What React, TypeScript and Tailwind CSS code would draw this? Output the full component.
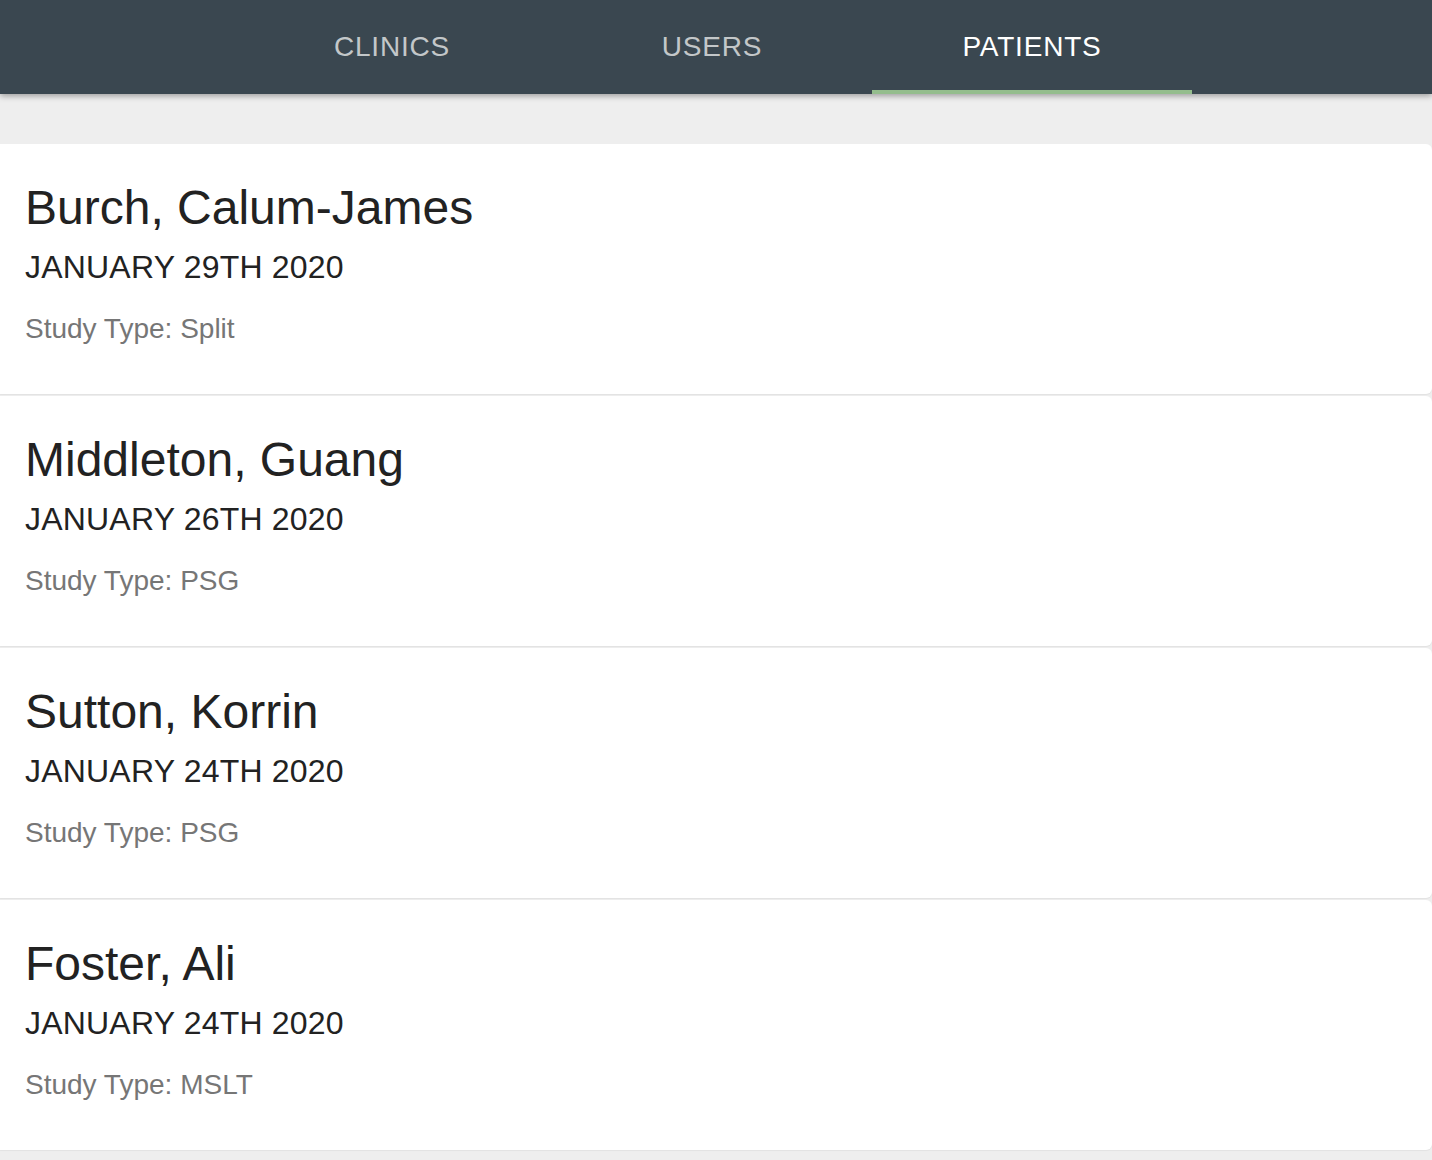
import React from "react";

const patients = [
  { name: "Burch, Calum-James", date: "JANUARY 29TH 2020", type: "Split" },
  { name: "Middleton, Guang", date: "JANUARY 26TH 2020", type: "PSG" },
  { name: "Sutton, Korrin", date: "JANUARY 24TH 2020", type: "PSG" },
  { name: "Foster, Ali", date: "JANUARY 24TH 2020", type: "MSLT" },
];

const tabs = ["CLINICS", "USERS", "PATIENTS"];

export default function App() {
  return (
    <div
      className="min-h-[1160px] w-full bg-[#eeeeee] overflow-hidden"
      style={{ fontFamily: '"Liberation Sans", Arial, sans-serif' }}
    >
      <header className="relative z-10 h-[94px] bg-[#3a4750] shadow-[0_2px_6px_rgba(0,0,0,0.35)]">
        <nav className="flex h-full justify-center pr-[8px]">
          {tabs.map((t) => {
            const active = t === "PATIENTS";
            return (
              <div
                key={t}
                className="relative flex h-full w-[320px] items-center justify-center"
              >
                <span
                  className={
                    "text-[28px] leading-none tracking-[0.8px] " +
                    (active ? "text-white" : "text-[#c3c7c9]")
                  }
                >
                  {t}
                </span>
                {active && (
                  <div className="absolute bottom-0 left-0 h-[4px] w-full bg-[#94bd8d]" />
                )}
              </div>
            );
          })}
        </nav>
      </header>

      <main className="flex flex-col gap-[2px] pt-[50px]">
        {patients.map((p) => (
          <div
            key={p.name}
            className="h-[250px] rounded-r-[6px] bg-white px-[25px] pt-[36px] shadow-[0_1px_1px_rgba(0,0,0,0.05)]"
          >
            <div className="text-[48px] leading-[56px] text-[#222222]">{p.name}</div>
            <div className="mt-[11px] text-[32px] leading-[40px] tracking-[0.2px] text-[#222222]">{p.date}</div>
            <div className="mt-[24px] text-[28px] leading-[36px] text-[#767676]">
              Study Type: {p.type}
            </div>
          </div>
        ))}
      </main>
    </div>
  );
}
